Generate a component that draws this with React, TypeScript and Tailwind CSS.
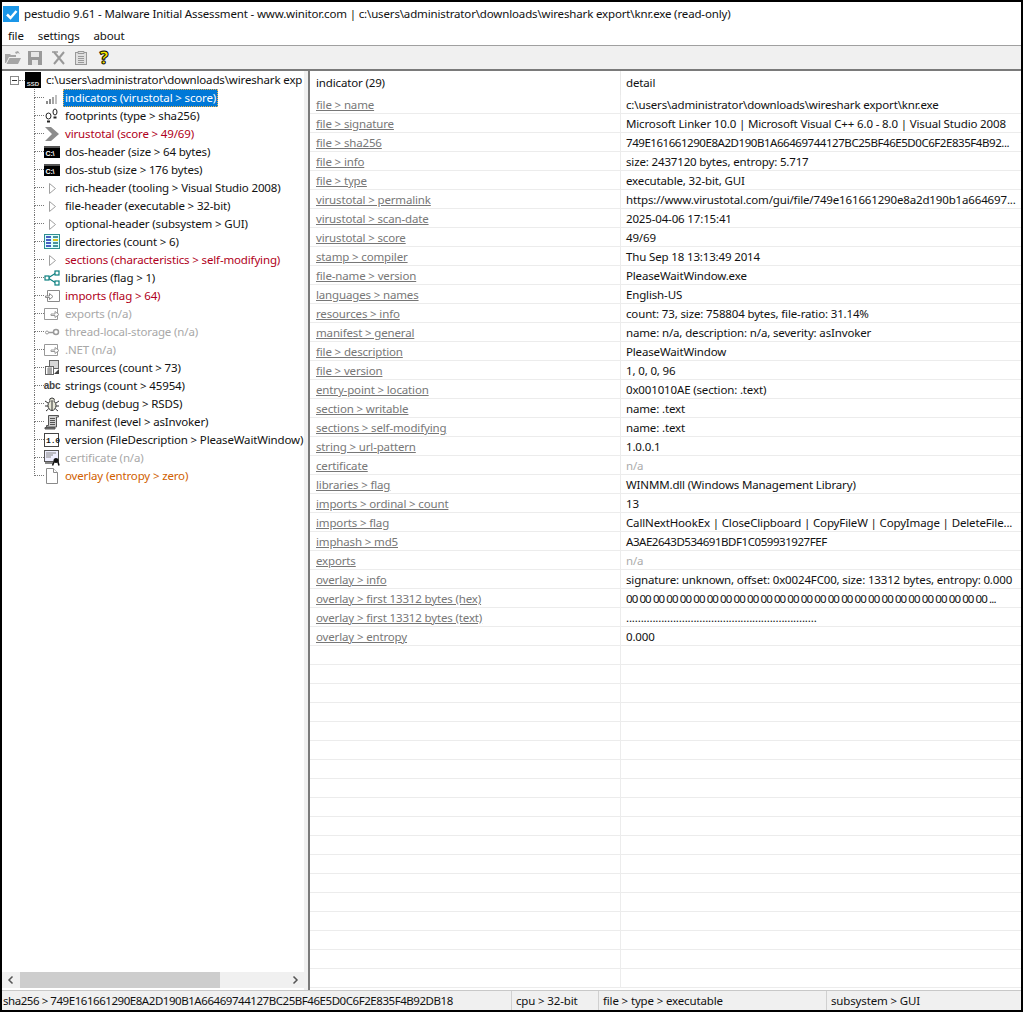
const indicators: [string, string, boolean?][] = [
  ["file > name", "c:\\users\\administrator\\downloads\\wireshark export\\knr.exe"],
  ["file > signature", "Microsoft Linker 10.0 | Microsoft Visual C++ 6.0 - 8.0 | Visual Studio 2008"],
  ["file > sha256", "749E161661290E8A2D190B1A66469744127BC25BF46E5D0C6F2E835F4B92..."],
  ["file > info", "size: 2437120 bytes, entropy: 5.717"],
  ["file > type", "executable, 32-bit, GUI"],
  ["virustotal > permalink", "https://www.virustotal.com/gui/file/749e161661290e8a2d190b1a664697..."],
  ["virustotal > scan-date", "2025-04-06 17:15:41"],
  ["virustotal > score", "49/69"],
  ["stamp > compiler", "Thu Sep 18 13:13:49 2014"],
  ["file-name > version", "PleaseWaitWindow.exe"],
  ["languages > names", "English-US"],
  ["resources > info", "count: 73, size: 758804 bytes, file-ratio: 31.14%"],
  ["manifest > general", "name: n/a, description: n/a, severity: asInvoker"],
  ["file > description", "PleaseWaitWindow"],
  ["file > version", "1, 0, 0, 96"],
  ["entry-point > location", "0x001010AE (section: .text)"],
  ["section > writable", "name: .text"],
  ["sections > self-modifying", "name: .text"],
  ["string > url-pattern", "1.0.0.1"],
  ["certificate", "n/a", true],
  ["libraries > flag", "WINMM.dll (Windows Management Library)"],
  ["imports > ordinal > count", "13"],
  ["imports > flag", "CallNextHookEx | CloseClipboard | CopyFileW | CopyImage | DeleteFile..."],
  ["imphash > md5", "A3AE2643D534691BDF1C059931927FEF"],
  ["exports", "n/a", true],
  ["overlay > info", "signature: unknown, offset: 0x0024FC00, size: 13312 bytes, entropy: 0.000"],
  ["overlay > first 13312 bytes (hex)", "00 00 00 00 00 00 00 00 00 00 00 00 00 00 00 00 00 00 00 00 00 00 00 00 00 00 00 ..."],
  ["overlay > first 13312 bytes (text)", "................................................................."],
  ["overlay > entropy", "0.000"],
];

const EMPTY_ROWS = Array.from({ length: 18 }, (_, i) => i);

function Icon({ name }: { name: string }) {
  switch (name) {
    case "bars":
      return (
        <svg width="16" height="16" viewBox="0 0 16 16" fill="#8a8a8a">
          <rect x="2" y="11" width="2" height="3" />
          <rect x="5" y="9" width="2" height="5" />
          <rect x="8" y="7" width="2" height="7" fill="#a5a5a5" />
          <rect x="11" y="5" width="2" height="9" fill="#c0c0c0" />
        </svg>
      );
    case "feet":
      return (
        <svg width="16" height="16" viewBox="0 0 16 16" fill="none" stroke="#222" strokeWidth="1">
          <ellipse cx="4.5" cy="8" rx="2.5" ry="3" />
          <path d="M3 13.5h3" strokeWidth="2" />
          <ellipse cx="11" cy="4" rx="2" ry="3" />
          <path d="M9.5 9.5h3" strokeWidth="2" />
        </svg>
      );
    case "vt":
      return (
        <svg width="16" height="16" viewBox="0 0 16 16" fill="#8c8c8c">
          <path d="M1 1h6l8 7-8 7H1l7-7z" />
        </svg>
      );
    case "cmd":
      return (
        <svg width="16" height="16" viewBox="0 0 16 16">
          <rect x="0" y="2" width="16" height="12" fill="#000" />
          <rect x="0" y="2" width="16" height="2" fill="#555" />
          <text x="1.5" y="11.5" fontSize="7" fontWeight="700" fill="#fff" fontFamily="Liberation Sans, sans-serif">C:\</text>
        </svg>
      );
    case "tri":
      return (
        <svg width="16" height="16" viewBox="0 0 16 16" fill="#fff" stroke="#a0a0a0">
          <path d="M5.5 3.5l6 5-6 5z" />
        </svg>
      );
    case "table":
      return (
        <svg width="16" height="16" viewBox="0 0 16 16">
          <rect x="0.5" y="0.5" width="15" height="14" fill="#dff" stroke="#2f8f8f" />
          <path d="M2 3h5M2 6h5M2 9h5M2 12h5" stroke="#1a2bb0" strokeWidth="1.5" />
          <path d="M9 3h5M9 6h5M9 9h5M9 12h5" stroke="#1a6f7f" strokeWidth="1.5" />
          <rect x="9" y="5" width="5" height="2" fill="#d8c020" />
        </svg>
      );
    case "share":
      return (
        <svg width="16" height="16" viewBox="0 0 16 16" fill="#fff" stroke="#0c8080" strokeWidth="1.2">
          <path d="M4 8l8-5M4 8l8 5" />
          <rect x="1" y="6" width="4" height="4" />
          <rect x="11" y="1" width="4" height="4" />
          <rect x="11" y="11" width="4" height="4" />
        </svg>
      );
    case "imports":
      return (
        <svg width="16" height="16" viewBox="0 0 16 16" fill="#fff" stroke="#8a8a8a">
          <path d="M3.5 2.5h12v11h-12z" />
          <path d="M1.5 8h4V5.5l3.500 3-3.500 3V9.500h-4z" />
        </svg>
      );
    case "exports":
      return (
        <svg width="16" height="16" viewBox="0 0 16 16" fill="#fff" stroke="#999">
          <path d="M0.500 2.500h13v11h-13z" />
          <path d="M7 8h4V5.500l4 3-4 3V9.500H7z" />
        </svg>
      );
    case "key":
      return (
        <svg width="16" height="16" viewBox="0 0 16 16" fill="none" stroke="#999">
          <circle cx="12" cy="8" r="2.500" strokeWidth="1.500" />
          <circle cx="3" cy="8.500" r="1.500" />
          <path d="M4.500 8.500h5" strokeWidth="1.500" />
        </svg>
      );
    case "resources":
      return (
        <svg width="16" height="16" viewBox="0 0 16 16" fill="#fff" stroke="#666">
          <rect x="5.500" y="0.500" width="9" height="8" fill="#d8d8d8" />
          <rect x="1.500" y="6.500" width="8" height="8" />
          <path d="M3 9h5M3 11h5M3 13h5M5 7v7M7 7v7" stroke="#888" />
          <path d="M10 14l5-5v5z" fill="#444" stroke="none" />
        </svg>
      );
    case "abc":
      return <span className="font-['Liberation_Sans',sans-serif] text-[10px] font-bold leading-none tracking-[-0.2px] text-[#444]">abc</span>;
    case "bug":
      return (
        <svg width="16" height="16" viewBox="0 0 16 16" fill="#e8e8d8" stroke="#333">
          <ellipse cx="8" cy="9.500" rx="4" ry="5" />
          <path d="M5.500 4.500a2.500 2.500 0 0 1 5 0" />
          <path d="M8 5v9M4 7L1 5M12 7l3-2M4 10H1M12 10h3M4.500 13L2 15M11.500 13l2.500 2" fill="none" />
        </svg>
      );
    case "scroll":
      return (
        <svg width="16" height="16" viewBox="0 0 16 16" fill="#cfcfcf" stroke="#555">
          <path d="M4.500 1.500h10v1.500h-2v10h-10v-1.500h2z" />
          <path d="M6 4.500h5M6 6.500h5M6 8.500h5M6 10.500h5" />
          <path d="M1 13.500h10v1.500H1z" fill="#777" />
        </svg>
      );
    case "ver":
      return (
        <svg width="16" height="16" viewBox="0 0 16 16">
          <rect x="0.500" y="1.500" width="14" height="13" fill="#fff" stroke="#444" />
          <text x="2" y="11" fontSize="8" fontWeight="700" fill="#111" fontFamily="Liberation Mono, monospace">1.0</text>
        </svg>
      );
    case "cert":
      return (
        <svg width="16" height="16" viewBox="0 0 16 16">
          <rect x="0.500" y="0.500" width="14" height="11" fill="#eef" stroke="#555" />
          <path d="M2 3h10M2 5h7M2 7h5" stroke="#888" />
          <circle cx="12" cy="10.500" r="2.500" fill="#111" />
          <path d="M10 12l-1.500 3.500M14 12l1 3.500" stroke="#111" strokeWidth="1.500" />
          <path d="M1 13h8" stroke="#111" />
        </svg>
      );
    case "doc":
      return (
        <svg width="16" height="16" viewBox="0 0 16 16" fill="#fff" stroke="#8a8a8a">
          <path d="M2.500 0.500h7l4 4v11h-11z" />
          <path d="M9.500 0.500v4h4" />
        </svg>
      );
    default:
      return null;
  }
}

const tree = [
  { icon: "bars", label: "indicators (virustotal > score)", selected: true },
  { icon: "feet", label: "footprints (type > sha256)" },
  { icon: "vt", label: "virustotal (score > 49/69)", tone: "red" },
  { icon: "cmd", label: "dos-header (size > 64 bytes)" },
  { icon: "cmd", label: "dos-stub (size > 176 bytes)" },
  { icon: "tri", label: "rich-header (tooling > Visual Studio 2008)" },
  { icon: "tri", label: "file-header (executable > 32-bit)" },
  { icon: "tri", label: "optional-header (subsystem > GUI)" },
  { icon: "table", label: "directories (count > 6)" },
  { icon: "tri", label: "sections (characteristics > self-modifying)", tone: "red" },
  { icon: "share", label: "libraries (flag > 1)" },
  { icon: "imports", label: "imports (flag > 64)", tone: "red" },
  { icon: "exports", label: "exports (n/a)", tone: "gray" },
  { icon: "key", label: "thread-local-storage (n/a)", tone: "gray" },
  { icon: "exports", label: ".NET (n/a)", tone: "gray" },
  { icon: "resources", label: "resources (count > 73)" },
  { icon: "abc", label: "strings (count > 45954)" },
  { icon: "bug", label: "debug (debug > RSDS)" },
  { icon: "scroll", label: "manifest (level > asInvoker)" },
  { icon: "ver", label: "version (FileDescription > PleaseWaitWindow)" },
  { icon: "cert", label: "certificate (n/a)", tone: "gray" },
  { icon: "doc", label: "overlay (entropy > zero)", tone: "orange" },
];

function toneClass(tone?: string) {
  if (tone === "red") return "text-[#b00020]";
  if (tone === "gray") return "text-[#a8a8a8]";
  if (tone === "orange") return "text-[#d06000]";
  return "text-[#111]";
}

function TreeRow({ icon, label, tone, selected, last }: { icon: string; label: string; tone?: string; selected?: boolean; last?: boolean }) {
  return (
    <div className="flex h-[18px] items-center whitespace-nowrap">
      <div className="ml-[32px] flex h-full w-[10px] shrink-0 flex-col">
        <div className="h-[9px] border-b border-l border-dotted border-[#777]" />
        {!last && <div className="h-[9px] border-l border-dotted border-[#777]" />}
      </div>
      <div className="flex w-[16px] shrink-0 items-center justify-center">
        <Icon name={icon} />
      </div>
      <span
        className={
          selected
            ? "ml-[3px] flex h-[18px] items-center border border-dotted border-[#f5b342] bg-[#0078d7] px-px text-white"
            : `ml-[3px] px-[2px] ${toneClass(tone)}`
        }
      >
        {label}
      </span>
    </div>
  );
}

// long hex strings: the digits in the original are narrower than Noto's
function detailClass(detail: string, muted?: boolean) {
  if (muted) return "text-[#ababab]";
  if (detail.startsWith("00 00")) return "tracking-[-0.9px] text-[#111]";
  if (/^[0-9A-F]{20}/.test(detail)) return "tracking-[-0.45px] text-[#111]";
  return "text-[#111]";
}

export default function App() {
  return (
    <div className="flex h-[1012px] w-[1023px] flex-col overflow-hidden border-x-2 border-b-2 border-t-2 border-black bg-white font-['Noto_Sans',sans-serif] text-[11.5px] leading-none tracking-[-0.15px] text-[#111]">
      {/* title bar */}
      <div className="flex h-[24px] shrink-0 items-center">
        <div className="ml-px flex h-[16px] w-[16px] items-center justify-center bg-[#1a96e8]">
          <svg width="13" height="13" viewBox="0 0 13 13" fill="none" stroke="#fff" strokeWidth="2.500">
            <path d="M2 6.500l3.500 3.500L11.500 3" />
          </svg>
        </div>
        <span className="ml-[5px]">
          pestudio 9.61 - Malware Initial Assessment - www.winitor.com | c:\users\administrator\downloads\wireshark export\knr.exe (read-only)
        </span>
      </div>

      {/* menu */}
      <div className="flex h-[20px] shrink-0 items-center border-b border-[#a0a0a0] pl-[6px]">
        <span>file</span>
        <span className="ml-[14px]">settings</span>
        <span className="ml-[14px]">about</span>
      </div>

      {/* toolbar */}
      <div className="flex h-[25px] shrink-0 items-center border-b-2 border-[#7a7a7a] bg-[#f0f0f0] pl-[3px]">
        <svg width="16" height="16" viewBox="0 0 16 16" fill="#a5a5a5">
          <path d="M0 4h5l1 1h5v2H4l-3 6H0zM4.500 8H16l-3 6H1.500zM10 2l3-1 2 3-2-1-2 1z" />
        </svg>
        <svg className="ml-[6px]" width="16" height="16" viewBox="0 0 16 16" fill="#9a9a9a">
          <path d="M1 1h14v14H1z" />
          <rect x="4" y="2" width="8" height="5" fill="#e8e8e8" />
          <rect x="5" y="10" width="6" height="5" fill="#e8e8e8" />
        </svg>
        <svg className="ml-[8px]" width="16" height="16" viewBox="0 0 16 16" fill="none" stroke="#999" strokeWidth="2">
          <path d="M3 2l10 12M13 2L3 14" />
          <path d="M1 2h6" strokeWidth="1.500" />
        </svg>
        <svg className="ml-[6px]" width="16" height="16" viewBox="0 0 16 16" fill="#e0e0e0" stroke="#999">
          <rect x="2.500" y="2.500" width="11" height="12" />
          <path d="M5 1.500h6v2H5zM5 6.500h6M5 8.500h6M5 10.500h6M5 12.500h6" />
        </svg>
        <span className="ml-[7px] flex w-[16px] justify-center text-[17px] font-black leading-none text-[#f6e600] [-webkit-text-stroke:1px_#000]">?</span>
      </div>

      <div className="flex min-h-0 flex-1 bg-[#f0f0f0]">
        {/* tree panel */}
        <div className="flex w-[302px] shrink-0 flex-col bg-white">
          <div className="min-h-0 flex-1 overflow-hidden">
            <div className="flex h-[18px] items-center whitespace-nowrap">
              <div className="ml-[8px] flex h-[9px] w-[9px] items-center justify-center border border-[#8a8a8a]">
                <div className="h-px w-[5px] bg-[#333]" />
              </div>
              <div className="h-0 w-[6px] border-b border-dotted border-[#777]" />
              <div className="flex h-[16px] w-[16px] items-end justify-center bg-black pb-px font-['Liberation_Sans',sans-serif] text-[6px] font-bold tracking-normal text-[#ddd]">SSD</div>
              <span className="ml-[5px]">c:\users\administrator\downloads\wireshark exp</span>
            </div>
            {tree.map((t, i) => (
              <TreeRow key={t.label} {...t} last={i === tree.length - 1} />
            ))}
          </div>
          {/* scrollbar */}
          <div className="mb-[2px] flex h-[16px] shrink-0 items-center bg-[#f0f0f0]">
            <svg width="18" height="16" viewBox="0 0 18 16" fill="none" stroke="#555" strokeWidth="1.500">
              <path d="M10.500 4.500l-3.500 3.500 3.500 3.500" />
            </svg>
            <div className="h-full w-[200px] bg-[#cdcdcd]" />
            <div className="flex-1" />
            <svg width="18" height="16" viewBox="0 0 18 16" fill="none" stroke="#555" strokeWidth="1.500">
              <path d="M7.500 4.500l3.500 3.500-3.500 3.500" />
            </svg>
          </div>
        </div>

        {/* table panel */}
        <div className="ml-[4px] min-w-0 flex-1 overflow-hidden border-l-2 border-[#7a7a7a] bg-white">
          <div className="flex h-[24px] items-center">
            <div className="w-[311px] border-r border-[#e8e8e8] pl-[6px] leading-[24px]">indicator (29)</div>
            <div className="pl-[5px]">detail</div>
          </div>
          {indicators.map(([name, detail, muted]) => (
            <div key={name} className="flex h-[19px] items-center whitespace-nowrap border-b border-[#ececec]">
              <div className="h-full w-[311px] shrink-0 overflow-hidden border-r border-[#ececec] pl-[6px] leading-[19px] text-[#777] underline">{name}</div>
              <div className={`pl-[5px] leading-[19px] ${detailClass(detail, muted)}`}>{detail}</div>
            </div>
          ))}
          {EMPTY_ROWS.map((i) => (
            <div key={i} className="flex h-[19px] border-b border-[#ececec]">
              <div className="h-full w-[311px] border-r border-[#ececec]" />
            </div>
          ))}
        </div>
      </div>

      {/* status bar */}
      <div className="flex h-[20px] shrink-0 items-center border-t border-[#c8c8c8] bg-[#f0f0f0]">
        <div className="w-[510px] shrink-0 border-r border-[#d0d0d0] pl-px leading-[19px] tracking-[-0.45px]">sha256 &gt; 749E161661290E8A2D190B1A66469744127BC25BF46E5D0C6F2E835F4B92DB18</div>
        <div className="w-[87px] shrink-0 border-r border-[#d0d0d0] pl-[4px] leading-[19px]">cpu &gt; 32-bit</div>
        <div className="w-[228px] shrink-0 border-r border-[#d0d0d0] pl-[4px] leading-[19px]">file &gt; type &gt; executable</div>
        <div className="pl-[4px] leading-[19px]">subsystem &gt; GUI</div>
      </div>
    </div>
  );
}
